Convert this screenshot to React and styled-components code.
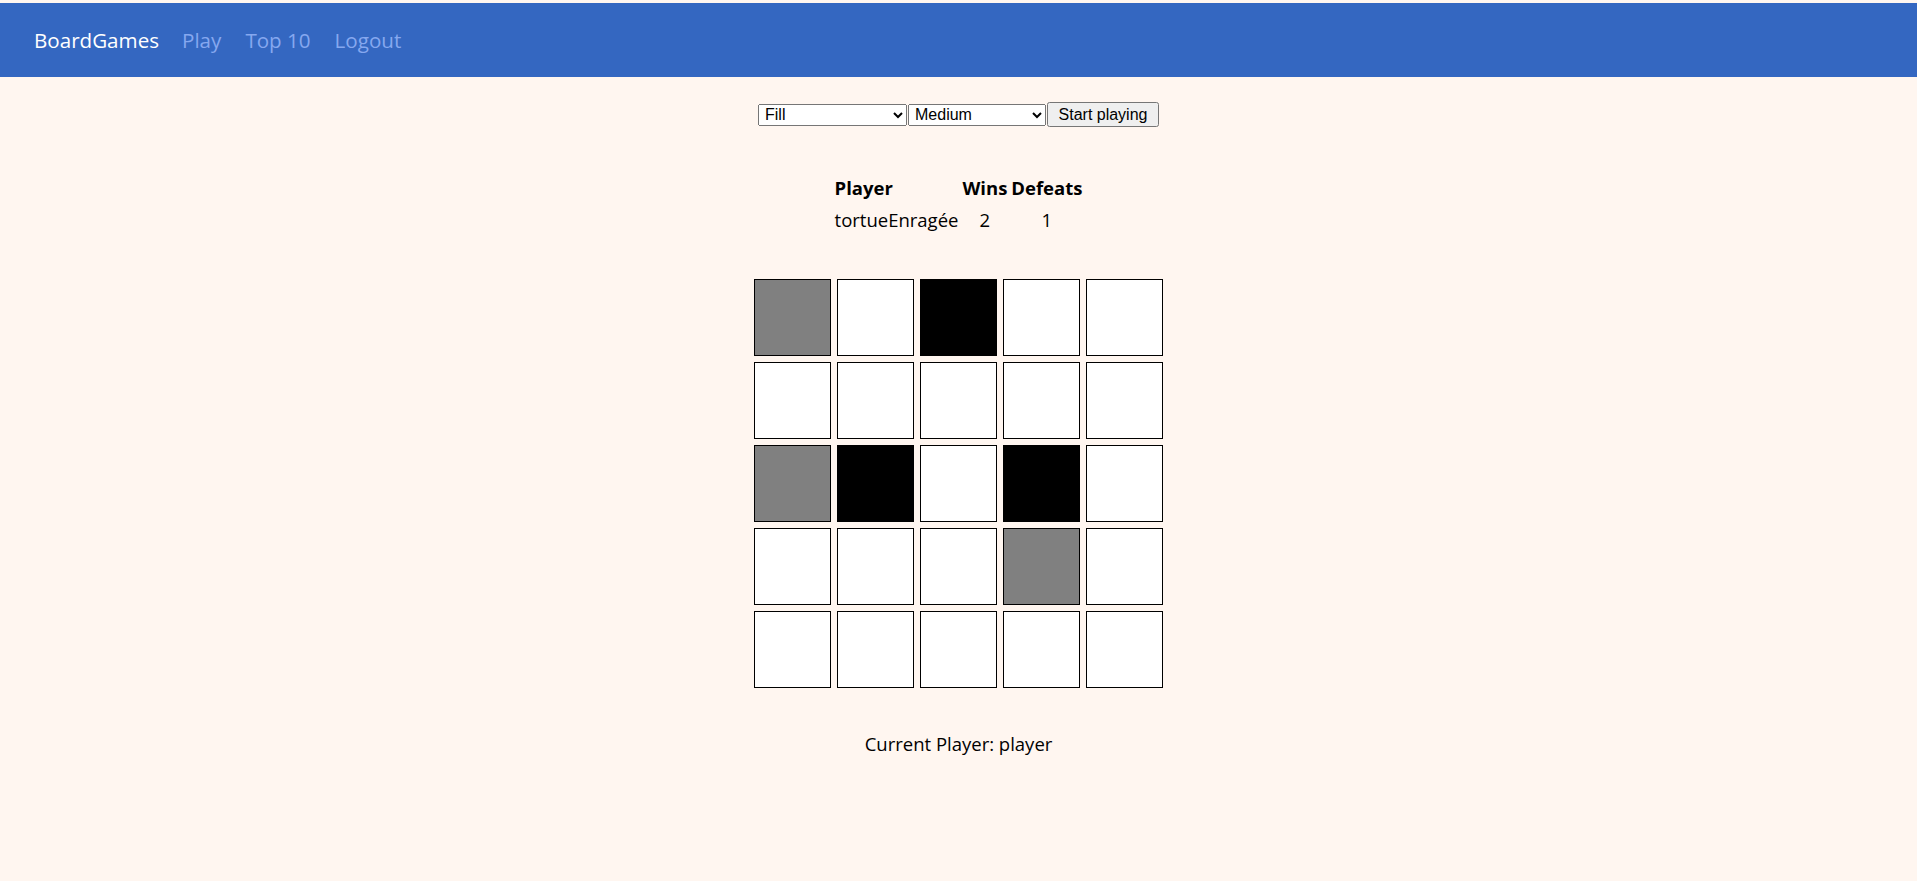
import React, { useState } from 'react';
import styled, { createGlobalStyle } from 'styled-components';

const GlobalStyle = createGlobalStyle`
  html, body {
    margin: 0;
    padding: 0;
    background: #fff6f0;
  }
  body {
    font-family: "Open Sans", "Noto Sans", sans-serif;
    color: #000;
  }
`;

const Page = styled.div`
  min-height: 881px;
  padding-top: 3px;
  box-sizing: border-box;
  background: #fff6f0;
`;

const Navbar = styled.nav`
  height: 74px;
  background-color: #3467c1;
  display: flex;
  align-items: center;
  padding: 0 0 0 34px;
`;

const Brand = styled.a`
  color: #fff;
  font-size: 20.6px;
  text-decoration: none;
  margin-right: 11px;
`;

const NavLink = styled.a`
  color: #86a8ef;
  font-size: 20.6px;
  text-decoration: none;
  padding: 0 12px;
`;

const Main = styled.main`
  display: flex;
  flex-direction: column;
  align-items: center;
`;

const Controls = styled.div`
  display: flex;
  align-items: center;
  margin-top: 25px;
`;

const Select = styled.select`
  width: ${(p) => p.$width}px;
  height: 22px;
  box-sizing: border-box;
  font-family: "Liberation Sans", Arial, sans-serif;
  font-size: 16px;
  line-height: 18px;
  padding: 0 0 0 2px;
  margin: 0 1px 0 0;
`;

const Button = styled.button`
  height: 25px;
  width: 112px;
  font-family: "Liberation Sans", Arial, sans-serif;
  font-size: 16px;
  padding: 0 4px;
  white-space: nowrap;
`;

const ScoreTable = styled.table`
  margin-top: 44px;
  border-spacing: 2px;
  font-size: 18.5px;
  line-height: 1.5;
`;

const Th = styled.th`
  padding: 1px;
  text-align: ${(p) => p.$align || 'center'};
  font-weight: 700;
`;

const Td = styled.td`
  padding: 1px;
  text-align: ${(p) => p.$align || 'center'};
`;

const Board = styled.div`
  display: grid;
  grid-template-columns: repeat(5, 83px);
  margin-top: 39px;
`;

const Cell = styled.div`
  width: 75px;
  height: 75px;
  margin: 3px;
  border: 1px solid #000;
  background: ${(p) => p.$color};
`;

const Status = styled.p`
  margin: 40px 0 0;
  font-size: 18.5px;
`;

const COLORS = { 0: '#fff', 1: '#000', 2: '#808080' };

const BOARD = [
  [2, 0, 1, 0, 0],
  [0, 0, 0, 0, 0],
  [2, 1, 0, 1, 0],
  [0, 0, 0, 2, 0],
  [0, 0, 0, 0, 0],
];

export default function App() {
  const [game, setGame] = useState('fill');
  const [level, setLevel] = useState('medium');

  return (
    <Page>
      <GlobalStyle />
      <Navbar>
        <Brand href="#">BoardGames</Brand>
        <NavLink href="#">Play</NavLink>
        <NavLink href="#">Top 10</NavLink>
        <NavLink href="#">Logout</NavLink>
      </Navbar>
      <Main>
        <Controls>
          <Select $width={149} value={game} onChange={(e) => setGame(e.target.value)}>
            <option value="fill">Fill</option>
            <option value="tictactoe">TicTacToe</option>
          </Select>
          <Select $width={138} value={level} onChange={(e) => setLevel(e.target.value)}>
            <option value="easy">Easy</option>
            <option value="medium">Medium</option>
            <option value="hard">Hard</option>
          </Select>
          <Button>Start playing</Button>
        </Controls>
        <ScoreTable>
          <thead>
            <tr>
              <Th $align="left">Player</Th>
              <Th>Wins</Th>
              <Th>Defeats</Th>
            </tr>
          </thead>
          <tbody>
            <tr>
              <Td $align="left">tortueEnragée</Td>
              <Td>2</Td>
              <Td>1</Td>
            </tr>
          </tbody>
        </ScoreTable>
        <Board>
          {BOARD.flat().map((v, i) => (
            <Cell key={i} $color={COLORS[v]} />
          ))}
        </Board>
        <Status>Current Player: player</Status>
      </Main>
    </Page>
  );
}
